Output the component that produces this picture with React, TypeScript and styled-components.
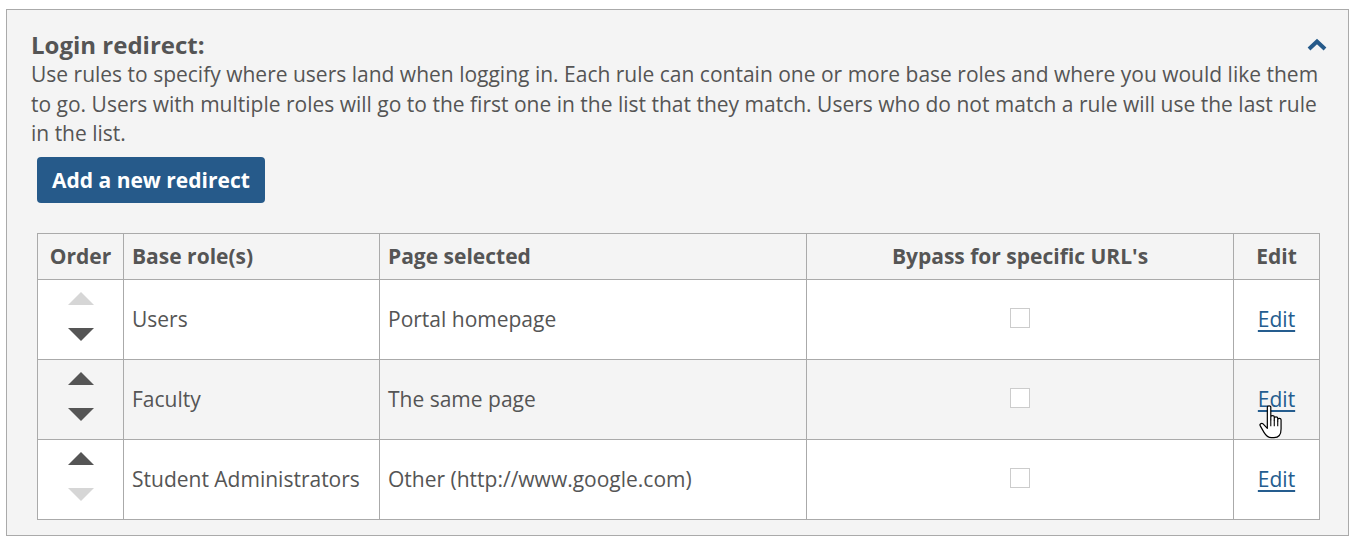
import React from 'react';
import styled, { createGlobalStyle } from 'styled-components';

const GlobalStyle = createGlobalStyle`
  body {
    margin: 0;
    background: #ffffff;
    font-family: "Open Sans", "Noto Sans", sans-serif;
    color: #555555;
  }
`;

const Page = styled.div`
  padding: 9px 7px 10px 6px;
`;

const Panel = styled.section`
  position: relative;
  background-color: #f4f4f4;
  border: 1px solid #aaaaaa;
  padding: 20px 29px 15px 23px;
`;

const Header = styled.div`
  display: flex;
  justify-content: space-between;
  align-items: center;
  padding-left: 1px;
`;

const Title = styled.h2`
  margin: 0;
  font-size: 24px;
  font-weight: 700;
  line-height: 30px;
  color: #555555;
`;

const Collapse = styled.button`
  background: transparent;
  border: none;
  padding: 0;
  margin-right: -8px;
  cursor: pointer;
  display: flex;
  align-items: center;
`;

const Description = styled.p`
  margin: 0 0 8px 1px;
  font-size: 21px;
  line-height: 29.5px;
  color: #555555;
`;

const PrimaryButton = styled.button`
  margin-left: 7px;
  background-color: #265a8a;
  color: #ffffff;
  border: none;
  border-radius: 4px;
  height: 46px;
  padding: 0 15px;
  font-family: inherit;
  font-size: 21px;
  font-weight: 700;
  cursor: pointer;
`;

const Table = styled.table`
  margin: 30px 0 0 7px;
  width: calc(100% - 7px);
  border-collapse: collapse;
  table-layout: fixed;
  font-size: 21px;
`;

const Th = styled.th<{ $align?: string }>`
  height: 45px;
  padding: 0 8px;
  border: 1px solid #aaaaaa;
  background-color: #f4f4f4;
  text-align: ${({ $align }) => $align || 'left'};
  font-weight: 700;
  color: #555555;
  white-space: nowrap;
`;

const Row = styled.tr<{ $shaded: boolean }>`
  background-color: ${({ $shaded }) => ($shaded ? '#f4f4f4' : '#ffffff')};
`;

const Td = styled.td<{ $align?: string }>`
  position: relative;
  height: 79px;
  padding: 0 8px;
  border: 1px solid #aaaaaa;
  text-align: ${({ $align }) => $align || 'left'};
  color: #555555;
  vertical-align: middle;
`;

const OrderControls = styled.div`
  display: flex;
  flex-direction: column;
  align-items: center;
  gap: 23px;
  padding-bottom: 6px;
`;

const Arrow = styled.span<{ $dir: 'up' | 'down'; $enabled: boolean }>`
  width: 0;
  height: 0;
  border-left: 13.5px solid transparent;
  border-right: 13.5px solid transparent;
  ${({ $dir, $enabled }) =>
    $dir === 'up'
      ? `border-bottom: 13px solid ${$enabled ? '#555555' : '#d6d6d6'};`
      : `border-top: 13px solid ${$enabled ? '#555555' : '#d6d6d6'};`}
  cursor: ${({ $enabled }) => ($enabled ? 'pointer' : 'default')};
`;

const CheckBox = styled.span`
  display: block;
  width: 18px;
  height: 18px;
  margin: 0 auto 2px;
  border: 1px solid #cccccc;
  background-color: #ffffff;
`;

const EditLink = styled.a`
  color: #255d8f;
  text-decoration: underline;
  text-underline-offset: 3px;
  cursor: pointer;
`;

const Cursor = styled.svg`
  position: absolute;
  left: 24px;
  top: 45px;
  pointer-events: none;
`;

const rules = [
  { role: 'Users', page: 'Portal homepage' },
  { role: 'Faculty', page: 'The same page' },
  { role: 'Student Administrators', page: 'Other (http://www.google.com)' },
];

const HandCursor = () => (
  <Cursor width="26" height="34" viewBox="1 1 17.5 25.5">
    <path
      d="M7 2.5 C7 1.3 9.6 1.3 9.6 2.5 L9.6 12 L9.6 9.8 C9.6 8.6 12.2 8.6 12.2 9.8 L12.2 12.5 L12.2 10.8 C12.2 9.6 14.8 9.6 14.8 10.8 L14.8 13 L14.8 12 C14.8 10.8 17.3 10.8 17.3 12 L17.3 19 C17.3 23 15.5 25.5 12 25.5 L10 25.5 C7.5 25.5 6 24 4.5 21.5 L1.6 16.5 C1 15.4 2.6 14 3.8 15.2 L7 18.5 Z"
      fill="#ffffff"
      stroke="#000000"
      strokeWidth="0.9"
      strokeLinejoin="round"
    />
    <path d="M9.6 12 L9.6 17 M12.2 12.5 L12.2 17 M14.8 13 L14.8 17" stroke="#000000" strokeWidth="0.8" />
  </Cursor>
);

const App: React.FC = () => {
  return (
    <>
      <GlobalStyle />
      <Page>
        <Panel>
          <Header>
            <Title>Login redirect:</Title>
            <Collapse aria-label="Collapse">
              <svg width="20" height="14" viewBox="0 0 20 14">
                <path d="M2 11 L10 3.5 L18 11" fill="none" stroke="#265a8a" strokeWidth="4" />
              </svg>
            </Collapse>
          </Header>
          <Description>
            Use rules to specify where users land when logging in. Each rule can contain one or more base roles and
            where you would like them to go. Users with multiple roles will go to the first one in the list that they
            match. Users who do not match a rule will use the last rule in the list.
          </Description>
          <PrimaryButton>Add a new redirect</PrimaryButton>
          <Table>
            <colgroup>
              <col style={{ width: 86 }} />
              <col style={{ width: 256 }} />
              <col style={{ width: 427 }} />
              <col style={{ width: 427 }} />
              <col style={{ width: 86 }} />
            </colgroup>
            <thead>
              <tr>
                <Th $align="center">Order</Th>
                <Th>Base role(s)</Th>
                <Th>Page selected</Th>
                <Th $align="center">Bypass for specific URL's</Th>
                <Th $align="center">Edit</Th>
              </tr>
            </thead>
            <tbody>
              {rules.map((rule, i) => (
                <Row key={rule.role} $shaded={i % 2 === 1}>
                  <Td $align="center">
                    <OrderControls>
                      <Arrow $dir="up" $enabled={i > 0} />
                      <Arrow $dir="down" $enabled={i < rules.length - 1} />
                    </OrderControls>
                  </Td>
                  <Td>{rule.role}</Td>
                  <Td>{rule.page}</Td>
                  <Td $align="center">
                    <CheckBox />
                  </Td>
                  <Td $align="center">
                    <EditLink>Edit</EditLink>
                    {i === 1 && <HandCursor />}
                  </Td>
                </Row>
              ))}
            </tbody>
          </Table>
        </Panel>
      </Page>
    </>
  );
};

export default App;
